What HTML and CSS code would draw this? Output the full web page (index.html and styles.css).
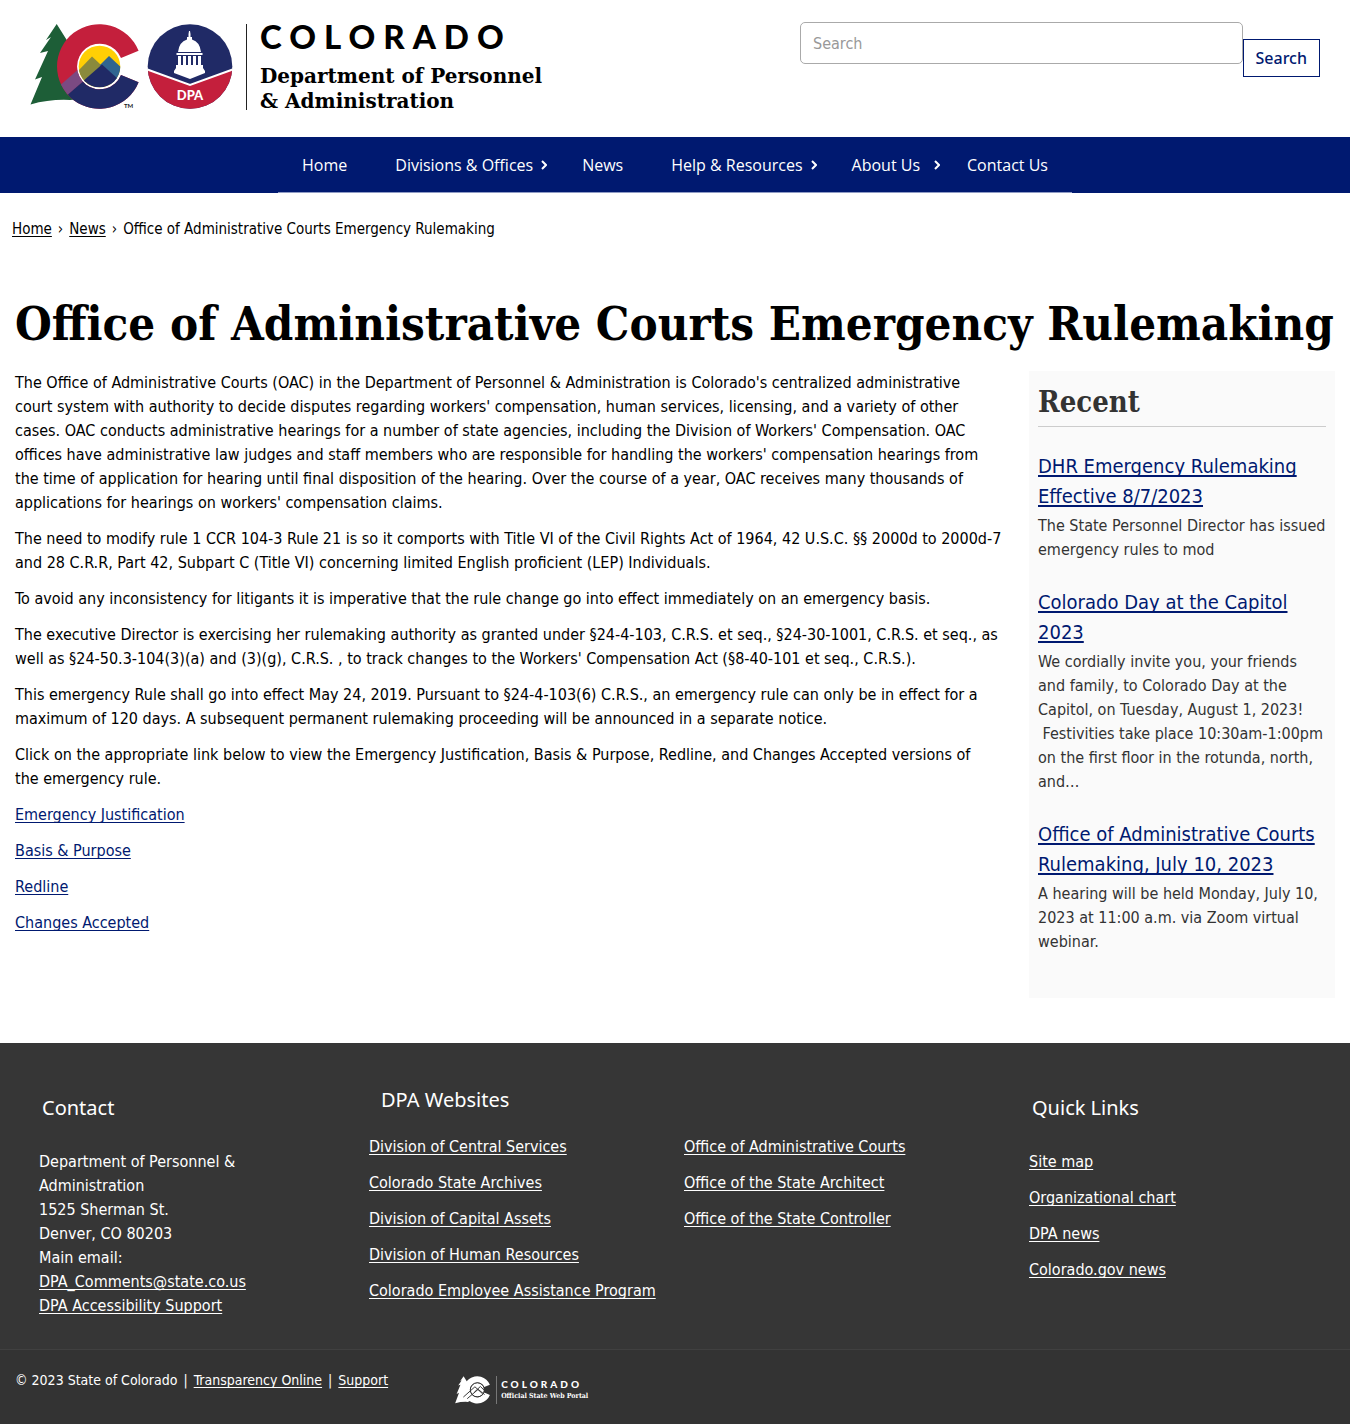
FILE: index.html
```html
<!DOCTYPE html>
<html lang="en">
<head>
<meta charset="utf-8">
<meta name="viewport" content="width=device-width, initial-scale=1">
<title>Office of Administrative Courts Emergency Rulemaking</title>
<link rel="stylesheet" href="styles.css">
</head>
<body>
<header class="site-header">
  <a class="brand" href="#">
    <svg class="brand-marks" viewBox="0 0 203 86" width="203" height="86" aria-hidden="true">
      <defs>
        <clipPath id="c-shape"><path d="M108.600 26.800A42.300 42.300 0 1 0 108.600 58.200L91 51A22.800 22.800 0 1 1 91 34Z"/></clipPath>
        <clipPath id="c-sky"><circle cx="69.500" cy="42.500" r="20.800"/></clipPath>
        <clipPath id="seal"><circle cx="160" cy="42.500" r="42.300"/></clipPath>
      </defs>
      <path fill="#1d5e37" d="M26.700 0L38 18L50 75L40 76Q20 75 .5 80.500L12 53L5 55.500L18 27L10 29L21 13L16 16Z"/>
      <g clip-path="url(#c-shape)">
        <path fill="#c41f3c" d="M20 0H115V86H20Z"/>
        <path fill="#7b4a82" d="M26 65L51 43L72 41L38 71Z"/>
        <path fill="#202a66" d="M38 70.500L72 41L115 48V86H44Z"/>
      </g>
      <g clip-path="url(#c-sky)">
        <path fill="#ffcf05" d="M45 20H95V66H45Z"/>
        <path fill="#8a8a3c" d="M45 50L62 32.500L85 54L60 66H45Z"/>
        <path fill="#2f6590" d="M70 41L79 32L95 47V60H75Z"/>
        <path fill="#202a66" d="M45 64L72 40.500L100 66H45Z"/>
      </g>
      <text x="94" y="84" class="tm">TM</text>
      <g clip-path="url(#seal)">
        <path fill="#202a66" d="M117 0H203V86H117Z"/>
        <path fill="#c41f3c" stroke="#fff" stroke-width="2" d="M116 45L160 61L204 45V90H116Z"/>
      </g>
      <g fill="#fff">
        <path d="M158.500 10L159 7H160L160.500 10V13H162V15.500Q170 18 171 28H148Q149 18 157 15.500V13H158.500Z"/>
        <path d="M146.500 29H172.500V31H146.500ZM148 32H151V41H148ZM153 32H156V41H153ZM158 32H161V41H158ZM163 32H166V41H163ZM168 32H171V41H168ZM146 41H173V44L175 47V49L160 55L144 49V47L146 44Z"/>
      </g>
      <text x="160" y="76" text-anchor="middle" class="seal-text">DPA</text>
    </svg>
    <span class="brand-text">
      <span class="brand-state">COLORADO</span>
      <span class="brand-dept">Department of Personnel<br>&amp; Administration</span>
    </span>
  </a>
  <form class="search" role="search">
    <input class="search-input" type="search" aria-label="Search" placeholder="Search">
    <button class="search-button" type="submit">Search</button>
  </form>
</header>

<nav class="main-nav" aria-label="Main">
  <ul class="nav-list">
    <li><a href="#">Home</a></li>
    <li class="has-menu"><a href="#">Divisions &amp; Offices<svg class="chevron" viewBox="0 0 6 10" aria-hidden="true"><path d="M1 1L5 5L1 9"/></svg></a></li>
    <li><a href="#">News</a></li>
    <li class="has-menu"><a href="#">Help &amp; Resources<svg class="chevron" viewBox="0 0 6 10" aria-hidden="true"><path d="M1 1L5 5L1 9"/></svg></a></li>
    <li class="has-menu spaced"><a href="#">About Us<svg class="chevron" viewBox="0 0 6 10" aria-hidden="true"><path d="M1 1L5 5L1 9"/></svg></a></li>
    <li><a href="#">Contact Us</a></li>
  </ul>
</nav>

<nav class="breadcrumb" aria-label="Breadcrumb">
  <a href="#">Home</a><span>›</span><a href="#">News</a><span>›</span>Office of Administrative Courts Emergency Rulemaking
</nav>

<main class="page">
  <h1>Office of Administrative Courts Emergency Rulemaking</h1>
  <div class="columns">
    <article class="content">
      <p>The Office of Administrative Courts (OAC) in the Department of Personnel &amp; Administration is Colorado's centralized administrative<br>court system with authority to decide disputes regarding workers' compensation, human services, licensing, and a variety of other cases. OAC conducts administrative hearings for a number of state agencies, including the Division of Workers' Compensation. OAC offices have administrative law judges and staff members who are responsible for handling the workers' compensation hearings from the time of application for hearing until final disposition of the hearing. Over the course of a year, OAC receives many thousands of applications for hearings on workers' compensation claims.</p>
      <p>The need to modify rule 1 CCR 104-3 Rule 21 is so it comports with Title VI of the Civil Rights Act of 1964, 42 U.S.C. §§ 2000d to 2000d-7 and 28 C.R.R, Part 42, Subpart C (Title VI) concerning limited English proficient (LEP) Individuals.</p>
      <p>To avoid any inconsistency for litigants it is imperative that the rule change go into effect immediately on an emergency basis.</p>
      <p>The executive Director is exercising her rulemaking authority as granted under §24-4-103, C.R.S. et seq., §24-30-1001, C.R.S. et seq., as well as §24-50.3-104(3)(a) and (3)(g), C.R.S. , to track changes to the Workers' Compensation Act (§8-40-101 et seq., C.R.S.).</p>
      <p>This emergency Rule shall go into effect May 24, 2019. Pursuant to §24-4-103(6) C.R.S., an emergency rule can only be in effect for a maximum of 120 days. A subsequent permanent rulemaking proceeding will be announced in a separate notice.</p>
      <p>Click on the appropriate link below to view the Emergency Justification, Basis &amp; Purpose, Redline, and Changes Accepted versions of<br>the emergency rule.</p>
      <p><a href="#">Emergency Justification</a></p>
      <p><a href="#">Basis &amp; Purpose</a></p>
      <p><a href="#">Redline</a></p>
      <p><a href="#">Changes Accepted</a></p>
    </article>
    <aside class="recent">
      <h2>Recent</h2>
      <section class="recent-item">
        <h3><a href="#">DHR Emergency Rulemaking Effective 8/7/2023</a></h3>
        <p>The State Personnel Director has issued emergency rules to mod</p>
      </section>
      <section class="recent-item">
        <h3><a href="#">Colorado Day at the Capitol 2023</a></h3>
        <p>We cordially invite you, your friends and family, to Colorado Day at the Capitol, on Tuesday, August 1, 2023! &nbsp;Festivities take place 10:30am-1:00pm on the first floor in the rotunda, north, and…</p>
      </section>
      <section class="recent-item">
        <h3><a href="#">Office of Administrative Courts Rulemaking, July 10, 2023</a></h3>
        <p>A hearing will be held Monday, July 10, 2023 at 11:00 a.m. via Zoom virtual webinar.</p>
      </section>
    </aside>
  </div>
</main>

<footer class="site-footer">
  <div class="footer-grid">
    <section class="footer-col">
      <h2>Contact</h2>
      <address>Department of Personnel &amp; Administration<br>1525 Sherman St.<br>Denver, CO 80203<br>Main email:<br><a href="#">DPA_Comments@state.co.us</a><br><a href="#">DPA Accessibility Support</a></address>
    </section>
    <section class="footer-col sites">
      <h2>DPA Websites</h2>
      <div class="site-lists">
        <ul>
          <li><a href="#">Division of Central Services</a></li>
          <li><a href="#">Colorado State Archives</a></li>
          <li><a href="#">Division of Capital Assets</a></li>
          <li><a href="#">Division of Human Resources</a></li>
          <li><a href="#">Colorado Employee Assistance Program</a></li>
        </ul>
        <ul>
          <li><a href="#">Office of Administrative Courts</a></li>
          <li><a href="#">Office of the State Architect</a></li>
          <li><a href="#">Office of the State Controller</a></li>
        </ul>
      </div>
    </section>
    <section class="footer-col">
      <h2>Quick Links</h2>
      <ul>
        <li><a href="#">Site map</a></li>
        <li><a href="#">Organizational chart</a></li>
        <li><a href="#">DPA news</a></li>
        <li><a href="#">Colorado.gov news</a></li>
      </ul>
    </section>
  </div>
  <div class="footer-bottom">
    <p class="legal">© 2023 State of Colorado<span>|</span><a href="#">Transparency Online</a><span>|</span><a href="#">Support</a></p>
    <a class="portal" href="#">
      <svg viewBox="0 0 112 86" width="36" height="28" aria-hidden="true">
        <path fill="#fff" d="M26.700 0L38 18L50 75L40 80Q20 79 .5 84L12.500 51.500L5 55.500L17 26.500L10 29L21 13L16 16Z"/>
        <path fill="#fff" d="M108.600 26.800A42.300 42.300 0 1 0 108.600 58.200L91 51A22.800 22.800 0 1 1 91 34Z"/>
        <circle cx="69.500" cy="42.500" r="21" fill="#fff"/>
        <path fill="none" stroke="#333" stroke-width="3" d="M26 65L62 33L85 54M60 50L79 32L92 45M38 70L72 41L92 57"/>
        <circle cx="69.500" cy="42.500" r="22" fill="none" stroke="#333" stroke-width="3"/>
      </svg>
      <span class="portal-text"><span class="portal-state">COLORADO</span><span class="portal-name">Official State Web Portal</span></span>
    </a>
  </div>
</footer>
</body>
</html>
```
FILE: styles.css
```css
* { box-sizing: border-box; }

body {
  margin: 0;
  background: #fff;
  color: #000;
  font: 16px/24px "DejaVu Sans Condensed", "DejaVu Sans", sans-serif;
}

h1, h2, h3, p, ul { margin: 0; padding: 0; }
ul { list-style: none; }
a { color: #001970; text-underline-offset: 2px; text-decoration-skip-ink: none; }

/* Header */
.site-header {
  display: flex;
  justify-content: space-between;
  align-items: flex-start;
  gap: 24px;
  padding: 22px 30px 27px;
}
.brand { display: flex; gap: 13px; padding-top: 2px; color: #000; text-decoration: none; }
.tm { font: 700 6px Lato, sans-serif; fill: #222; }
.seal-text { font: 900 13px Lato, sans-serif; fill: #fff; }
.brand-text {
  display: flex;
  flex-direction: column;
  gap: 16px;
  padding-left: 13px;
  border-left: 1px solid #222;
  white-space: nowrap;
}
.brand-state { font: 900 33px/24px Lato, sans-serif; letter-spacing: 8px; }
.brand-dept { margin-bottom: -4px; font: 700 20px/25px "DejaVu Serif", serif; }

.search { display: flex; flex: 0 1 520px; align-items: flex-start; }
.search-input {
  flex: 1;
  min-width: 0;
  height: 42px;
  padding: 0 12px;
  border: 1px solid #aaa;
  border-radius: 5px;
  background: #fff;
  font: inherit;
  appearance: none;
}
.search-input::placeholder { color: #999; }
.search-button {
  height: 38px;
  margin-top: 17px;
  padding: 0 12px;
  border: 1px solid #001970;
  background: #fff;
  color: #001970;
  font: 500 16px/24px "Noto Sans", sans-serif;
}

/* Navigation */
.main-nav { background: #001970; }
.nav-list { display: flex; flex-wrap: wrap; justify-content: center; width: fit-content; margin: 0 auto; border-bottom: 1px solid #8f9bc4; }
.nav-list a {
  display: flex;
  align-items: center;
  padding: 16px 24px 15px;
  color: #fff;
  font: 16px/24px "Open Sans", sans-serif;
  text-decoration: none;
}
.chevron { width: 6px; height: 10px; margin-left: 8px; fill: none; stroke: #fff; stroke-width: 2; }
.nav-list .has-menu a { padding-right: 11px; }
.nav-list .spaced a { padding-right: 3px; }
.spaced .chevron { margin-left: 14px; }

.breadcrumb { padding: 24px 12px 0; font-size: 15px; }
.breadcrumb a { color: #000; }
.breadcrumb span { padding: 0 6px; }

/* Main */
.page { padding: 55px 15px 45px; }
h1 { font: 700 47px/56px "DejaVu Serif Condensed", "DejaVu Serif", serif; }
.columns { display: grid; grid-template-columns: minmax(0, 1fr) 306px; gap: 26px; padding-top: 19px; }
.content p { margin-bottom: 12px; }

.recent { padding: 12px 9px 44px; background: #fafafa; color: #333; }
.recent h2 {
  margin-bottom: 24px;
  padding-bottom: 4px;
  border-bottom: 1px solid #ccc;
  font: 700 29px/39px "DejaVu Serif Condensed", "DejaVu Serif", serif;
}
.recent h3 { margin-bottom: 3px; font-size: 20px; font-weight: 400; line-height: 30px; }
.recent-item + .recent-item { margin-top: 25px; }

/* Footer */
.site-footer { background: #363636; color: #fff; }
.site-footer a { color: #fff; }
.footer-grid { display: grid; grid-template-columns: 1fr 2fr 1fr; padding: 45px 15px 31px; }
.footer-col { padding: 8px 24px 0; }
.footer-col h2 { margin-bottom: 30px; padding-left: 3px; font: 20px/24px "Noto Sans", sans-serif; }
.footer-col li { margin-bottom: 12px; white-space: nowrap; }
.footer-col.sites { padding: 0 6px 0 24px; }
.sites h2 { margin-bottom: 23px; padding-left: 12px; }
.site-lists { display: grid; grid-template-columns: 1fr 1fr; }
address { font-style: normal; }
.footer-bottom {
  display: flex;
  gap: 67px;
  padding: 18px 15px 20px;
  border-top: 1px solid #404040;
  background: #333;
}
.legal { font-size: 14px; line-height: 24px; }
.legal span { padding: 0 6px; }
.portal { display: flex; gap: 5px; padding-top: 8px; text-decoration: none; }
.portal-text { display: flex; flex-direction: column; gap: 2px; padding: 3px 0 0 4px; border-left: 1px solid #777; white-space: nowrap; }
.portal-state { font: 900 10px/10px Lato, sans-serif; letter-spacing: 3px; }
.portal-name { font: 700 7px/9px "DejaVu Serif Condensed", "DejaVu Serif", serif; }
```
